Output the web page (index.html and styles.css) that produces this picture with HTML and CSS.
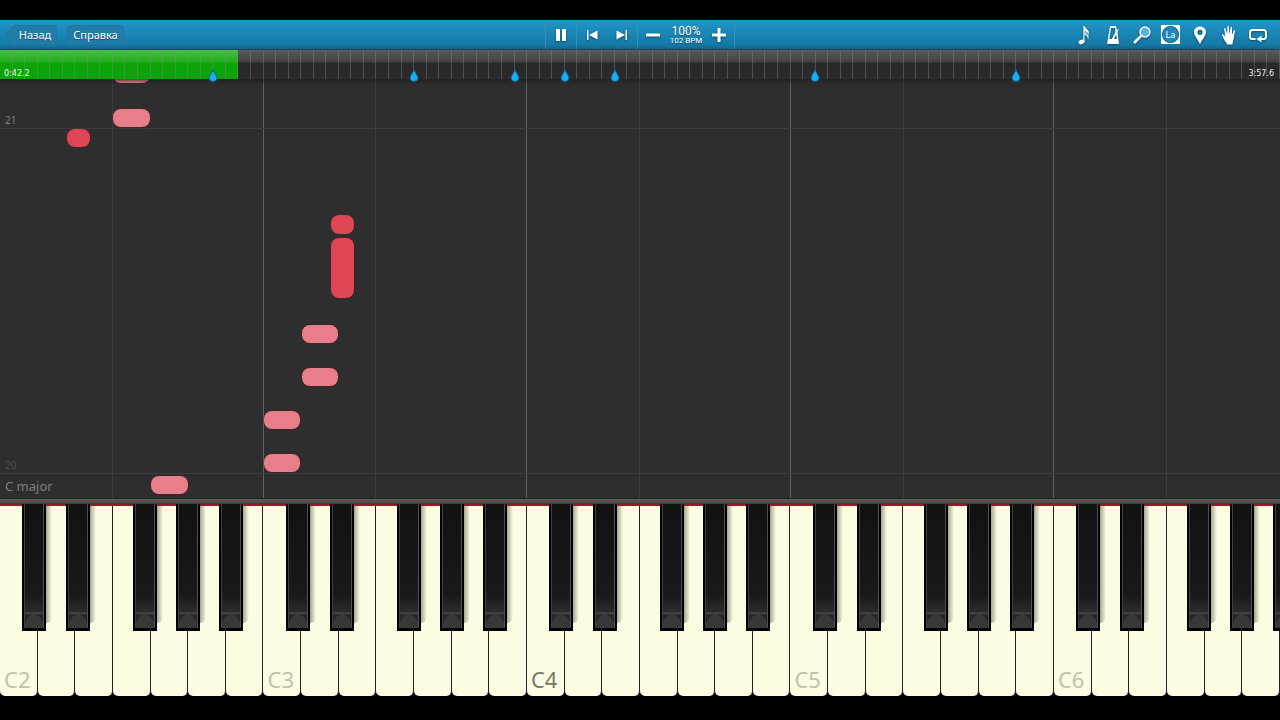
FILE: index.html
```html
<!DOCTYPE html>
<html lang="ru">
<head>
  <meta charset="UTF-8" />
  <meta name="viewport" content="width=device-width, initial-scale=1.0" />
  <title>Piano</title>
  <link rel="stylesheet" href="styles.css">
</head>
<body>
  <header class="toolbar">
    <nav class="nav">
      <button class="nav-button back">
        <svg class="back-shape" viewBox="0 0 52 20" preserveAspectRatio="none"><path d="M.5 10 8 1.500Q9 .5 11 .5H49Q51.500 .5 51.500 3V17Q51.500 19.500 49 19.500H11Q9 19.500 8 18.500Z"/></svg>
        <span>Назад</span>
      </button>
      <button class="nav-button help">Справка</button>
    </nav>
    <div class="transport">
      <div class="group">
        <button class="icon" aria-label="Пауза"><svg width="12" height="14"><path d="M1 1h4v12H1zM7 1h4v12H7z"/></svg></button>
      </div>
      <div class="group">
        <button class="icon" aria-label="Предыдущий такт"><svg width="12" height="12"><path d="M1 1h1.500v10H1zM11.500 1.500v9L3 6z"/></svg></button>
        <button class="icon" aria-label="Следующий такт"><svg width="12" height="12"><path d="M9.500 1H11v10H9.500zM.5 1.500v9L9 6z"/></svg></button>
      </div>
      <div class="group">
        <button class="icon" aria-label="Медленнее"><svg width="14" height="14"><path d="M0 5.500h14v3H0z"/></svg></button>
        <div class="tempo"><span class="percent">100%</span><span class="bpm">102 BPM</span></div>
        <button class="icon" aria-label="Быстрее"><svg width="14" height="14"><path d="M0 5.500h5.500V0h3v5.500H14v3H8.500V14h-3V8.500H0z"/></svg></button>
      </div>
    </div>
    <div class="tools">
      <button class="icon" aria-label="Ноты"><svg width="20" height="20" viewBox="0 0 20 20"><ellipse cx="7.500" cy="17" rx="3.100" ry="2.200" transform="rotate(-20 7.500 17)"/><path d="M9.400 1h1c.4 2.400 4.500 3.500 4.500 7l-.4 1.500c-.6-2-2.300-3-4-3.600V17H9.400z"/><path d="M10.300 6c1.200 1.500 4.500 2.500 4.500 5.700 0 1.300-.4 2.300-1 3.300.4-3-1.500-4.300-3.500-5z" opacity=".7"/></svg></button>
      <button class="icon" aria-label="Метроном"><svg width="20" height="20" viewBox="0 0 20 20"><path fill-rule="evenodd" d="M7 1h6l1 4.500 1-1.500.8.5L14.500 7 16 19H4zM8 3 6.300 14H9l3.700-6L12 3zM13.300 9.500 11 14h2.800z"/><path d="m9 14 4-8 1 .5L10.500 14z"/></svg></button>
      <button class="icon" aria-label="Масштаб"><svg width="20" height="20" viewBox="0 0 20 20"><circle class="lens" cx="13" cy="7" r="5"/><path d="m8.300 10 1.700 1.700-7 7.300L1 17z"/></svg></button>
      <button class="icon" aria-label="Названия нот"><span class="la">La</span></button>
      <button class="icon" aria-label="Закладки"><svg width="20" height="20" viewBox="0 0 20 20"><path fill-rule="evenodd" d="M10 1.500c3.600 0 6 2.500 6 5.700 0 3.500-4 7-6 12-2-5-6-8.500-6-12 0-3.200 2.400-5.700 6-5.700zm0 3.300a2.600 2.600 0 1 0 0 5.200 2.600 2.600 0 0 0 0-5.200z"/></svg></button>
      <button class="icon" aria-label="Руки"><svg width="20" height="20" viewBox="0 0 20 20"><path d="M8 19.500c-.3-2-2.500-3.500-3.500-6L3 10c.6-1.400 2-.5 3.300 1.700L5.200 4c0-1.200 1.200-1.300 1.500 0L8.200 9.500 8.300 1.700c.1-1.200 1.400-1.200 1.500 0L10.500 9.500l1.100-7c.3-1.100 1.500-.9 1.500.3L12.900 10l1.800-4.500c.5-.9 1.500-.4 1.300.6L14.700 13.500c-.2 2-1.200 3.500-1.200 6z"/></svg></button>
      <button class="icon" aria-label="Повтор"><svg width="20" height="20" viewBox="0 0 20 20"><path class="line" d="M7.500 14H4.500Q2 14 2 11.500V7.500Q2 5 4.500 5h11Q18 5 18 7.500v4Q18 14 15.500 14H13"/><path d="M13.500 10.500v7L8.500 14z"/></svg></button>
    </div>
  </header>

  <div class="timeline">
    <div class="played" style="width: 18.6%"></div>
    <div class="ticks"></div>
    <span class="time">0:42.2</span>
    <span class="time">3:57.6</span>
    <svg class="marker" style="left: 16.65%" viewBox="0 0 10 13"><path d="M5 .5C6 4 9 6.500 9 9q0 3.500-4 3.500T1 9C1 6.500 4 4 5 .5z"/></svg>
    <svg class="marker" style="left: 32.35%" viewBox="0 0 10 13"><path d="M5 .5C6 4 9 6.500 9 9q0 3.500-4 3.500T1 9C1 6.500 4 4 5 .5z"/></svg>
    <svg class="marker" style="left: 40.2%" viewBox="0 0 10 13"><path d="M5 .5C6 4 9 6.500 9 9q0 3.500-4 3.500T1 9C1 6.500 4 4 5 .5z"/></svg>
    <svg class="marker" style="left: 44.12%" viewBox="0 0 10 13"><path d="M5 .5C6 4 9 6.500 9 9q0 3.500-4 3.500T1 9C1 6.500 4 4 5 .5z"/></svg>
    <svg class="marker" style="left: 48.04%" viewBox="0 0 10 13"><path d="M5 .5C6 4 9 6.500 9 9q0 3.500-4 3.500T1 9C1 6.500 4 4 5 .5z"/></svg>
    <svg class="marker" style="left: 63.7%" viewBox="0 0 10 13"><path d="M5 .5C6 4 9 6.500 9 9q0 3.500-4 3.500T1 9C1 6.500 4 4 5 .5z"/></svg>
    <svg class="marker" style="left: 79.4%" viewBox="0 0 10 13"><path d="M5 .5C6 4 9 6.500 9 9q0 3.500-4 3.500T1 9C1 6.500 4 4 5 .5z"/></svg>
  </div>

  <main class="roll">
    <div class="measure" style="bottom: 369px">21</div>
    <div class="measure faded" style="bottom: 24px">20</div>
    <div class="scale">C major</div>
    <div class="note" style="left: 8.85%; bottom: 415px; height: 18px"></div>
    <div class="note" style="left: 8.85%; bottom: 371px; height: 18px"></div>
    <div class="note sharp" style="left: 5.27%; bottom: 351px; height: 18px"></div>
    <div class="note sharp" style="left: 25.86%; bottom: 264px; height: 19px"></div>
    <div class="note sharp" style="left: 25.86%; bottom: 200px; height: 60px"></div>
    <div class="note" style="left: 23.57%; bottom: 155px; height: 18px"></div>
    <div class="note" style="left: 23.57%; bottom: 112px; height: 18px"></div>
    <div class="note" style="left: 20.62%; bottom: 69px; height: 18px"></div>
    <div class="note" style="left: 20.62%; bottom: 26px; height: 18px"></div>
    <div class="note" style="left: 11.8%; bottom: 4px; height: 18px"></div>
  </main>

  <div class="rail"></div>
  <div class="keyboard">
    <div class="key c"><button class="white">C2</button><button class="black" aria-label="C#2"></button></div>
    <div class="key d"><button class="white" aria-label="D2"></button><button class="black" aria-label="D#2"></button></div>
    <div class="key"><button class="white" aria-label="E2"></button></div>
    <div class="key f"><button class="white" aria-label="F2"></button><button class="black" aria-label="F#2"></button></div>
    <div class="key g"><button class="white" aria-label="G2"></button><button class="black" aria-label="G#2"></button></div>
    <div class="key a"><button class="white" aria-label="A2"></button><button class="black" aria-label="A#2"></button></div>
    <div class="key"><button class="white" aria-label="B2"></button></div>

    <div class="key c"><button class="white">C3</button><button class="black" aria-label="C#3"></button></div>
    <div class="key d"><button class="white" aria-label="D3"></button><button class="black" aria-label="D#3"></button></div>
    <div class="key"><button class="white" aria-label="E3"></button></div>
    <div class="key f"><button class="white" aria-label="F3"></button><button class="black" aria-label="F#3"></button></div>
    <div class="key g"><button class="white" aria-label="G3"></button><button class="black" aria-label="G#3"></button></div>
    <div class="key a"><button class="white" aria-label="A3"></button><button class="black" aria-label="A#3"></button></div>
    <div class="key"><button class="white" aria-label="B3"></button></div>

    <div class="key c"><button class="white middle">C4</button><button class="black" aria-label="C#4"></button></div>
    <div class="key d"><button class="white" aria-label="D4"></button><button class="black" aria-label="D#4"></button></div>
    <div class="key"><button class="white" aria-label="E4"></button></div>
    <div class="key f"><button class="white" aria-label="F4"></button><button class="black" aria-label="F#4"></button></div>
    <div class="key g"><button class="white" aria-label="G4"></button><button class="black" aria-label="G#4"></button></div>
    <div class="key a"><button class="white" aria-label="A4"></button><button class="black" aria-label="A#4"></button></div>
    <div class="key"><button class="white" aria-label="B4"></button></div>

    <div class="key c"><button class="white">C5</button><button class="black" aria-label="C#5"></button></div>
    <div class="key d"><button class="white" aria-label="D5"></button><button class="black" aria-label="D#5"></button></div>
    <div class="key"><button class="white" aria-label="E5"></button></div>
    <div class="key f"><button class="white" aria-label="F5"></button><button class="black" aria-label="F#5"></button></div>
    <div class="key g"><button class="white" aria-label="G5"></button><button class="black" aria-label="G#5"></button></div>
    <div class="key a"><button class="white" aria-label="A5"></button><button class="black" aria-label="A#5"></button></div>
    <div class="key"><button class="white" aria-label="B5"></button></div>

    <div class="key c"><button class="white">C6</button><button class="black" aria-label="C#6"></button></div>
    <div class="key d"><button class="white" aria-label="D6"></button><button class="black" aria-label="D#6"></button></div>
    <div class="key"><button class="white" aria-label="E6"></button></div>
    <div class="key f"><button class="white" aria-label="F6"></button><button class="black" aria-label="F#6"></button></div>
    <div class="key g"><button class="white" aria-label="G6"></button><button class="black" aria-label="G#6"></button></div>
    <div class="key a"><button class="white" aria-label="A6"></button><button class="black" aria-label="A#6"></button></div>
  </div>
</body>
</html>
```
FILE: styles.css
```css
* {
  box-sizing: border-box;
}
body {
  margin: 0;
  padding: 20px 0 24px;
  height: 100vh;
  display: flex;
  flex-direction: column;
  overflow: hidden;
  background: #000;
  font-family: "Noto Sans", sans-serif;
}
button {
  margin: 0;
  padding: 0;
  border: none;
  background: none;
  color: inherit;
  font: inherit;
  cursor: pointer;
}

/* toolbar */
.toolbar {
  display: grid;
  grid-template-columns: 1fr auto 1fr;
  height: 30px;
  flex: none;
  background: linear-gradient(#2096c8, #14749f);
  border-bottom: 1px solid #245f78;
  color: #fff;
}
.nav {
  display: flex;
  align-items: center;
  gap: 10px;
  padding-left: 5px;
}
.nav-button {
  position: relative;
  height: 20px;
  font-size: 11px;
  line-height: 18px;
  text-shadow: 0 1px 1px #0b4a68;
}
.back {
  width: 52px;
  padding-left: 8px;
}
.back span {
  position: relative;
}
.back-shape {
  position: absolute;
  left: 0;
  top: 0;
  width: 100%;
  height: 100%;
  fill: #207da8;
  stroke: #1f78a2;
}
.help {
  width: 57px;
  background: #207da8;
  border: 1px solid #1f78a2;
  border-radius: 3px;
}
.transport,
.group,
.tools {
  display: flex;
  align-items: stretch;
}
.group {
  border-left: 1px solid #3590ba;
}
.group:last-child {
  border-right: 1px solid #3590ba;
}
.icon {
  display: flex;
  align-items: center;
  justify-content: center;
  width: 30px;
}
.icon svg {
  fill: #fff;
  filter: drop-shadow(0 1px 1px #0b4a68);
}
.tempo {
  display: flex;
  flex-direction: column;
  align-items: center;
  justify-content: center;
  width: 36px;
  font-family: Roboto, sans-serif;
  text-shadow: 0 1px 1px #0b4a68;
}
.percent {
  font-size: 12px;
  line-height: 12px;
}
.bpm {
  font-size: 8px;
  line-height: 8px;
  white-space: nowrap;
}
.tools {
  justify-content: flex-end;
  padding-right: 8px;
}
.tools .icon {
  width: 29px;
}
.icon .lens {
  fill: #59b4dc;
  stroke: #fff;
  stroke-width: 1.4;
}
.icon .line {
  fill: none;
  stroke: #fff;
  stroke-width: 2;
}
.la {
  width: 19px;
  height: 19px;
  border-radius: 1px;
  background: radial-gradient(circle, #2088b7 7px, #17658a 8px, #fff 9px);
  font-size: 9px;
  line-height: 19px;
}

/* timeline */
.timeline {
  position: relative;
  z-index: 1;
  display: flex;
  align-items: flex-end;
  justify-content: space-between;
  height: 29px;
  flex: none;
  padding: 0 6px 0 4px;
  background: linear-gradient(#5b5b5b, #414141 12px, #272727 13px, #2b2b2b);
  box-shadow: 0 1px 5px #1a1a1a;
}
.played,
.ticks {
  position: absolute;
  left: 0;
  top: 0;
  bottom: 0;
}
.played {
  background: linear-gradient(#45c043, #22ad1d 12px, #0ba507 13px, #0ba307);
}
.ticks {
  right: 0;
  background: repeating-linear-gradient(90deg, transparent 0, transparent calc(100% / 102 - 1px), #8886 calc(100% / 102 - 1px), #8886 calc(100% / 102));
}
.time {
  position: relative;
  color: #eee;
  font: 8px/11px "DejaVu Sans", sans-serif;
}
.marker {
  position: absolute;
  top: 19px;
  width: 10px;
  height: 13px;
  margin-left: -5px;
  fill: #16aef5;
  stroke: #155f82;
}

/* falling notes */
.roll {
  position: relative;
  flex: 1;
  overflow: hidden;
  color: #808080;
  background:
    repeating-linear-gradient(90deg,
      transparent 0, transparent calc(300% / 34 - 1px),
      #3d3d3d calc(300% / 34 - 1px), #3d3d3d calc(300% / 34),
      transparent calc(300% / 34), transparent calc(700% / 34 - 1px),
      #606060 calc(700% / 34 - 1px), #606060 calc(700% / 34)),
    #2e2e2e;
}
.measure {
  position: absolute;
  left: 0;
  right: 0;
  padding-left: 5px;
  border-bottom: 1px solid #3c3c3c;
  font-size: 10px;
  line-height: 16px;
}
.faded {
  color: #505050;
}
.scale {
  position: absolute;
  left: 5px;
  bottom: 4px;
  font-size: 13px;
  line-height: 16px;
}
.note {
  position: absolute;
  width: 2.85%;
  border-radius: 8px;
  background: #e87e89;
  box-shadow: 0 0 2px #5a1c24;
}
.sharp {
  width: 1.8%;
  background: #de4555;
}

/* keyboard */
.rail {
  height: 8px;
  flex: none;
  background: linear-gradient(#222 0 1px, #5b5b5b 1px, #4a4a4a 5px, #8c1824 5px, #941d27);
}
.keyboard {
  display: flex;
  height: 190px;
  flex: none;
  overflow: clip;
  overflow-clip-margin: 2px;
}
.key {
  position: relative;
  flex: 1;
  display: flex;
}
.white {
  flex: 1;
  display: flex;
  align-items: flex-end;
  padding: 0 0 3px 4px;
  border-right: 1px solid #222;
  border-radius: 0 0 5px 5px;
  background: #fcfce2;
  color: #c2c2ac;
  font-size: 22px;
  line-height: 28px;
}
.middle {
  color: #78786a;
}
.black {
  position: absolute;
  z-index: 1;
  top: -2px;
  width: 64%;
  height: 127px;
  border: solid #000;
  border-width: 0 2px 3px;
  background:
    linear-gradient(90deg, #404040 0 1px, transparent 1px calc(100% - 1px), #505050 calc(100% - 1px)),
    radial-gradient(ellipse 10px 14px at 50% 100%, #383838 90%, transparent),
    linear-gradient(transparent 108px, #505050 109px, #262626 111px),
    linear-gradient(#111, #191919 90px, #2b2b2b 108px);
}
/* shadow cast on the white keys, starts below the red felt */
.black::after {
  content: "";
  position: absolute;
  left: calc(100% + 2px);
  top: 2px;
  bottom: 5px;
  width: 6px;
  border-radius: 0 0 6px 0;
  background: linear-gradient(90deg, #a5a593, #a5a59300);
}
.c .black {
  left: 59%;
}
.d .black {
  left: 76%;
}
.f .black {
  left: 54%;
}
.g .black {
  left: 68%;
}
.a .black {
  left: 82%;
}
```
